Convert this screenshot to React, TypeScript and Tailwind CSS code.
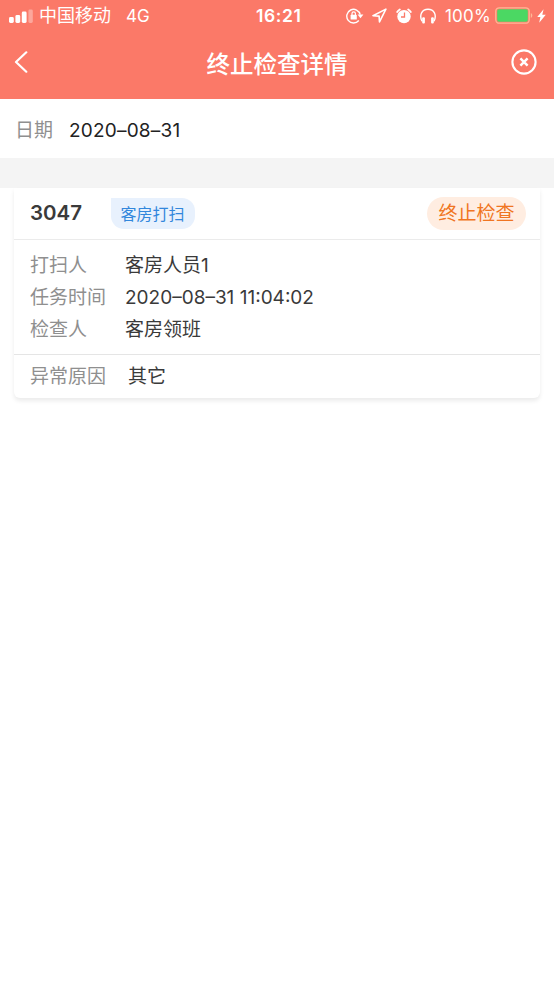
import type { ReactNode } from "react";

const task = {
  room: "3047",
  type: "客房打扫",
  status: "终止检查",
  reason: "其它",
  rows: [
    { label: "打扫人", value: "客房人员1" },
    { label: "任务时间", value: "2020–08–31 11:04:02" },
    { label: "检查人", value: "客房领班" },
  ],
};

function SignalIcon() {
  return (
    <svg width="24" height="14" viewBox="0 0 24 14" fill="currentColor" className="shrink-0">
      <rect x="0" y="8" width="4.8" height="6" rx="1.4" />
      <rect x="6.4" y="6" width="4.8" height="8" rx="1.4" />
      <rect x="12.8" y="2.500" width="4.8" height="11.5" rx="1.4" />
      <rect x="19.4" y="0.500" width="4.400" height="13.500" rx="1.4" opacity="0.35" />
    </svg>
  );
}

function RotationLockIcon() {
  return (
    <svg width="18" height="16" viewBox="0 0 18 16" fill="none" stroke="currentColor" className="shrink-0">
      <path d="M14.2 6.6A6.8 6.8 0 1 0 12.8 12.5" strokeWidth="1.4" />
      <path d="M11.6 6.6h5.8l-2.9 3.7z" fill="currentColor" stroke="none" />
      <rect x="4.6" y="6.8" width="6.2" height="4.8" rx="0.7" fill="currentColor" stroke="none" />
      <path d="M6 7.2V5.5a1.7 1.7 0 0 1 3.4 0v1.7" strokeWidth="1.2" />
    </svg>
  );
}

function LocationIcon() {
  return (
    <svg width="15" height="15" viewBox="0 0 15 15" fill="none" stroke="currentColor" strokeWidth="1.6" strokeLinejoin="round" className="shrink-0">
      <path d="M13.9 1.1 1 7.7l6.100.4.400 5.800z" />
    </svg>
  );
}

function AlarmIcon() {
  return (
    <svg width="16" height="16" viewBox="0 0 16 16" fill="none" className="shrink-0">
      <circle cx="8" cy="8.6" r="6.7" fill="currentColor" />
      <path d="M1.2 4a8 8 0 0 1 2.6-2.600M14.8 4a8 8 0 0 0-2.600-2.600" stroke="currentColor" strokeWidth="1.8" strokeLinecap="round" />
      <path d="M8.500 4.500v4.500H5" stroke="#fb7968" strokeWidth="1.300" />
    </svg>
  );
}

function HeadphonesIcon() {
  return (
    <svg width="18" height="16" viewBox="0 0 18 16" fill="none" stroke="currentColor" className="shrink-0">
      <path d="M3 13.200C-.1 7 3 1.200 9 1.200s9.100 5.800 6 12" strokeWidth="1.400" />
      <rect x="3.200" y="9.300" width="2.700" height="6.200" rx="1" fill="currentColor" stroke="none" />
      <rect x="12.100" y="9.300" width="2.700" height="6.200" rx="1" fill="currentColor" stroke="none" />
    </svg>
  );
}

function BatteryIcon() {
  return (
    <svg width="38" height="17" viewBox="0 0 38 17" fill="none" className="shrink-0">
      <rect x="0.8" y="0.8" width="33.400" height="15.400" rx="3.500" stroke="#ffb896" strokeWidth="1.300" />
      <rect x="2.200" y="2.200" width="30.600" height="12.600" rx="1.800" fill="#4bd863" />
      <path d="M35.800 6c2 .7 2 4.300 0 5z" fill="#ffb896" />
    </svg>
  );
}

function BoltIcon() {
  return (
    <svg width="9" height="14" viewBox="0 0 9 14" fill="currentColor" className="shrink-0">
      <path d="M6.600.3.200 7.900h3.200L2.200 13.700l6.600-8H5.300z" />
    </svg>
  );
}

function StatusBar() {
  return (
    <div className="grid h-[30px] grid-cols-[256px_90px_1fr] items-center text-lg leading-[30px]">
      <div className="flex items-center pl-[9px]">
        <SignalIcon />
        <span className="ml-1.5 pt-px">中国移动</span>
        <span className="ml-[15px] text-[17px]">4G</span>
      </div>
      <span className="text-[17.5px] font-semibold tracking-[0.6px]">16:21</span>
      <div className="flex items-center">
        <RotationLockIcon />
        <span className="ml-2 flex"><LocationIcon /></span>
        <span className="ml-[9px] flex"><AlarmIcon /></span>
        <span className="ml-[7px] flex"><HeadphonesIcon /></span>
        <span className="ml-2 w-[50px] text-[17px] tracking-[0.2px]">100%</span>
        <BatteryIcon />
        <span className="ml-1 flex"><BoltIcon /></span>
      </div>
    </div>
  );
}

function NavBar() {
  return (
    <div className="grid h-[69px] grid-cols-[60px_1fr_60px] items-center pb-[5px]">
      <button className="flex pl-[14px]" aria-label="返回">
        <svg width="14" height="23" viewBox="0 0 14 23" fill="none" stroke="currentColor" strokeWidth="2.2" strokeLinecap="round" strokeLinejoin="round">
          <path d="M12.300 1.300 2 11l10.300 9.700" />
        </svg>
      </button>
      <h1 className="pt-[5px] text-center text-[23.5px] leading-8 font-medium">终止检查详情</h1>
      <button className="flex justify-end pr-[17px]" aria-label="关闭">
        <svg width="26" height="26" viewBox="0 0 26 26" fill="none" stroke="currentColor">
          <circle cx="13" cy="13" r="11.600" strokeWidth="2.100" />
          <path d="m9.400 9.400 7.200 7.200M16.600 9.400l-7.200 7.200" strokeWidth="2.500" />
        </svg>
      </button>
    </div>
  );
}

function Row({ label, children }: { label: string; children: ReactNode }) {
  return (
    <div className="flex h-8 items-center">
      <span className="w-[95px] text-[#8f8f8f]">{label}</span>
      {children}
    </div>
  );
}

export default function App() {
  return (
    <div className="min-h-screen w-full bg-white font-['Inter','Noto_Sans_CJK_SC',sans-serif] text-[19px] text-[#3a3a3a]">
      <header className="bg-[#fb7968] text-white">
        <StatusBar />
        <NavBar />
      </header>

      <div className="flex h-[59px] items-center pt-[5px] pl-[15px]">
        <span className="w-[54px] text-[#8f8f8f]">日期</span>
        <span className="tracking-[0.2px] text-[#222]">2020–08–31</span>
      </div>

      <div className="h-[30px] bg-[#f4f4f4]" />

      <div className="mx-[14px] h-[210px] rounded-b-md bg-white shadow-[0_3px_4px_rgba(0,0,0,0.08)]">
        <div className="flex h-[52px] items-center border-b border-[#ebebeb] pr-[14px] pl-4">
          <span className="w-[81px] text-[20.5px] font-semibold">{task.room}</span>
          <span className="flex h-[31px] w-[84px] items-center justify-center rounded-[13px] rounded-tl-none bg-[#e8f1fd] pt-px pr-px text-base text-[#3287dc]">
            {task.type}
          </span>
          <span className="ml-auto flex h-[33px] w-[99px] items-center justify-center rounded-full bg-[#ffede1] pt-0.5 text-[19px] text-[#f07522]">
            {task.status}
          </span>
        </div>
        <div className="h-[115px] border-b border-[#e5e5e5] pt-[10px] pl-4">
          {task.rows.map((row) => (
            <Row key={row.label} label={row.label}>
              <span>{row.value}</span>
            </Row>
          ))}
        </div>
        <div className="flex h-[43px] items-center pt-0.5 pl-4">
          <span className="w-[98px] text-[#8f8f8f]">异常原因</span>
          <span>{task.reason}</span>
        </div>
      </div>
    </div>
  );
}
